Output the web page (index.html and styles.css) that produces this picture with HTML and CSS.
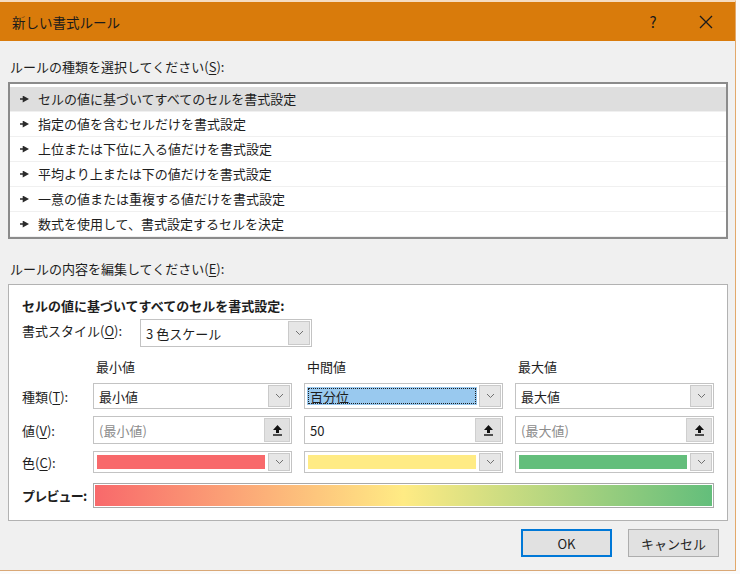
FILE: index.html
```html
<!DOCTYPE html>
<html lang="ja">
<head>
    <meta charset="UTF-8">
    <meta name="viewport" content="width=device-width, initial-scale=1.0">
    <title>新しい書式ルール</title>
    <link rel="stylesheet" href="styles.css">
</head>
<body>

    <div class="window">
        <div class="titlebar">
            <span class="title">新しい書式ルール</span>
            <span class="help">?</span>
            <span class="close">
                <svg width="14" height="14" viewBox="0 0 14 14"><path d="M1 1L13 13M13 1L1 13" stroke="#1a1a1a" stroke-width="1.3" fill="none"/></svg>
            </span>
        </div>

        <div class="content">
            <div class="label">ルールの種類を選択してください(<u>S</u>):</div>
            <ul class="rule-list">
                <li class="selected"><span class="marker"></span>セルの値に基づいてすべてのセルを書式設定</li>
                <li><span class="marker"></span>指定の値を含むセルだけを書式設定</li>
                <li><span class="marker"></span>上位または下位に入る値だけを書式設定</li>
                <li><span class="marker"></span>平均より上または下の値だけを書式設定</li>
                <li><span class="marker"></span>一意の値または重複する値だけを書式設定</li>
                <li><span class="marker"></span>数式を使用して、書式設定するセルを決定</li>
            </ul>

            <div class="label label-edit">ルールの内容を編集してください(<u>E</u>):</div>
            <div class="edit-box">
                <div class="heading">セルの値に基づいてすべてのセルを書式設定:</div>
                <div class="style-row">
                    <span class="style-label">書式スタイル(<u>O</u>):</span>
                    <div class="select style-select">
                        <span class="select-text">3 色スケール</span>
                        <span class="drop-btn"><svg width="9" height="6" viewBox="0 0 9 6"><path d="M1 1L4.5 4.5L8 1" stroke="#707070" fill="none"/></svg></span>
                    </div>
                </div>

                <div class="scale-grid">
                    <span></span>
                    <span class="col-head">最小値</span>
                    <span class="col-head">中間値</span>
                    <span class="col-head">最大値</span>

                    <span class="row-label">種類(<u>T</u>):</span>
                    <div class="select">
                        <span class="select-text">最小値</span>
                        <span class="drop-btn"><svg width="9" height="6" viewBox="0 0 9 6"><path d="M1 1L4.5 4.5L8 1" stroke="#707070" fill="none"/></svg></span>
                    </div>
                    <div class="select">
                        <span class="select-text focused">百分位</span>
                        <span class="drop-btn"><svg width="9" height="6" viewBox="0 0 9 6"><path d="M1 1L4.5 4.5L8 1" stroke="#707070" fill="none"/></svg></span>
                    </div>
                    <div class="select">
                        <span class="select-text">最大値</span>
                        <span class="drop-btn"><svg width="9" height="6" viewBox="0 0 9 6"><path d="M1 1L4.5 4.5L8 1" stroke="#707070" fill="none"/></svg></span>
                    </div>

                    <span class="row-label">値(<u>V</u>):</span>
                    <div class="input">
                        <span class="input-text placeholder">(最小値)</span>
                        <span class="ref-btn"><svg width="11" height="12" viewBox="0 0 11 12"><path d="M5.5 1L10 6H7V9H4V6H1Z" fill="#111"/><rect x="1" y="10.3" width="9" height="1.4" fill="#111"/></svg></span>
                    </div>
                    <div class="input">
                        <span class="input-text">50</span>
                        <span class="ref-btn"><svg width="11" height="12" viewBox="0 0 11 12"><path d="M5.5 1L10 6H7V9H4V6H1Z" fill="#111"/><rect x="1" y="10.3" width="9" height="1.4" fill="#111"/></svg></span>
                    </div>
                    <div class="input">
                        <span class="input-text placeholder">(最大値)</span>
                        <span class="ref-btn"><svg width="11" height="12" viewBox="0 0 11 12"><path d="M5.5 1L10 6H7V9H4V6H1Z" fill="#111"/><rect x="1" y="10.3" width="9" height="1.4" fill="#111"/></svg></span>
                    </div>

                    <span class="row-label">色(<u>C</u>):</span>
                    <div class="color-select">
                        <span class="swatch red"></span>
                        <span class="drop-btn"><svg width="9" height="6" viewBox="0 0 9 6"><path d="M1 1L4.5 4.5L8 1" stroke="#707070" fill="none"/></svg></span>
                    </div>
                    <div class="color-select">
                        <span class="swatch yellow"></span>
                        <span class="drop-btn"><svg width="9" height="6" viewBox="0 0 9 6"><path d="M1 1L4.5 4.5L8 1" stroke="#707070" fill="none"/></svg></span>
                    </div>
                    <div class="color-select">
                        <span class="swatch green"></span>
                        <span class="drop-btn"><svg width="9" height="6" viewBox="0 0 9 6"><path d="M1 1L4.5 4.5L8 1" stroke="#707070" fill="none"/></svg></span>
                    </div>

                    <span class="row-label preview-label">プレビュー:</span>
                    <div class="preview"><span class="preview-bar"></span></div>
                </div>
            </div>

            <div class="buttons">
                <button class="btn btn-default">OK</button>
                <button class="btn">キャンセル</button>
            </div>
        </div>
    </div>

</body>
</html>
```

FILE: styles.css
```css
* {
    box-sizing: border-box;
}

body {
    margin: 0;
    width: 740px;
    height: 574px;
    background-color: #fbfbfb;
    font-family: "Noto Sans CJK JP", "Noto Sans", sans-serif;
    font-size: 13px;
    color: #1e1e1e;
    overflow: hidden;
}

u {
    text-decoration-thickness: 1px;
    text-underline-offset: 2px;
}

.window {
    width: 736px;
    height: 571px;
    background-color: #f0f0f0;
    border-top: 2px solid #f6dcc0;
    border-right: 1px solid #e2a86a;
    border-bottom: 1px solid #d9a877;
}

.titlebar {
    height: 39px;
    background-color: #d97b0b;
    display: flex;
    align-items: center;
    padding-left: 12px;
    color: #1a1a1a;
}

.title {
    flex: 1;
    font-size: 13.5px;
}

.help {
    width: 20px;
    margin-right: 36px;
    text-align: center;
    font-size: 15px;
}

.close {
    width: 14px;
    height: 14px;
    margin-right: 22px;
    display: flex;
}

.content {
    padding: 0 7px 0 8px;
}

.label {
    height: 18px;
    line-height: 18px;
    padding-left: 2px;
    margin-top: 17px;
}

.rule-list {
    list-style: none;
    margin: 6px 0 0;
    padding: 3px 0 0;
    height: 157px;
    background-color: #fff;
    border: 2px solid #8b8b8b;
}

.rule-list li {
    height: 25px;
    line-height: 24px;
    display: flex;
    align-items: center;
    padding-left: 10px;
    border-bottom: 1px solid #f0f0f0;
}

.rule-list li.selected {
    background-color: #dedede;
}

.marker {
    width: 9px;
    height: 7px;
    margin-right: 9px;
    background-color: #2a2a2a;
    clip-path: polygon(0 40%, 30% 40%, 30% 0, 100% 50%, 30% 100%, 30% 60%, 0 60%);
}

.label-edit {
    margin-top: 21px;
}

.edit-box {
    margin-top: 6px;
    height: 237px;
    background-color: #fff;
    border: 1px solid #b2b2b2;
    padding: 12px 13px 0;
}

.heading {
    font-weight: bold;
    height: 18px;
    line-height: 18px;
}

.style-row {
    display: flex;
    align-items: center;
    margin-top: 4px;
}

.style-label {
    width: 118px;
    margin-top: -5px;
}

.select {
    height: 26px;
    border: 1px solid #c3c3c3;
    display: flex;
    align-items: stretch;
    padding: 1px;
}

.style-select {
    width: 172px;
    height: 28px;
}

.select-text {
    flex: 1;
    display: flex;
    align-items: center;
    padding-left: 4px;
}

.select-text.focused {
    background-color: #99c9ef;
    outline: 1px dotted #1e1e1e;
    outline-offset: -2px;
    margin: 2px 2px 2px 1px;
    padding-left: 3px;
}

.drop-btn {
    width: 22px;
    background-color: #e6e6e6;
    border: 1px solid #cacaca;
    display: flex;
    align-items: center;
    justify-content: center;
}

.scale-grid {
    display: grid;
    grid-template-columns: 59px repeat(3, 199px);
    grid-template-rows: 18px 26px 28px 22px 28px;
    column-gap: 12px;
    row-gap: 7px;
    margin-top: 11px;
}

.col-head {
    line-height: 18px;
    padding-left: 3px;
}

.row-label {
    display: flex;
    align-items: center;
    white-space: nowrap;
}

.input {
    border: 1px solid #c3c3c3;
    display: flex;
    align-items: stretch;
    padding: 1px;
}

.input-text {
    flex: 1;
    display: flex;
    align-items: center;
    padding-left: 4px;
}

.placeholder {
    color: #8c8c8c;
}

.ref-btn {
    width: 26px;
    background-color: #e1e1e1;
    border: 1px solid #cfcfcf;
    display: flex;
    align-items: center;
    justify-content: center;
}

.color-select {
    border: 1px solid #c3c3c3;
    display: flex;
    align-items: stretch;
    padding: 1px;
}

.swatch {
    flex: 1;
    margin: 2px 3px 2px 2px;
}

.red {
    background-color: #f8696b;
}

.yellow {
    background-color: #ffeb84;
}

.green {
    background-color: #63be7b;
}

.preview-label {
    font-weight: bold;
    margin-top: 3px;
    letter-spacing: -0.8px;
}

.preview {
    grid-column: span 3;
    margin-top: 3px;
    border: 1px solid #a9a9a9;
    padding: 1px;
    display: flex;
}

.preview-bar {
    flex: 1;
    background: linear-gradient(to right, #f8696b, #ffeb84 50%, #63be7b);
}

.buttons {
    display: flex;
    justify-content: flex-end;
    gap: 16px;
    margin-top: 8px;
    padding-right: 9px;
}

.btn {
    width: 91px;
    height: 28px;
    font-family: inherit;
    font-size: 13px;
    color: #1e1e1e;
    background-color: #e1e1e1;
    border: 1px solid #adadad;
    padding: 0;
}

.btn-default {
    border: 2px solid #0078d7;
}
```
